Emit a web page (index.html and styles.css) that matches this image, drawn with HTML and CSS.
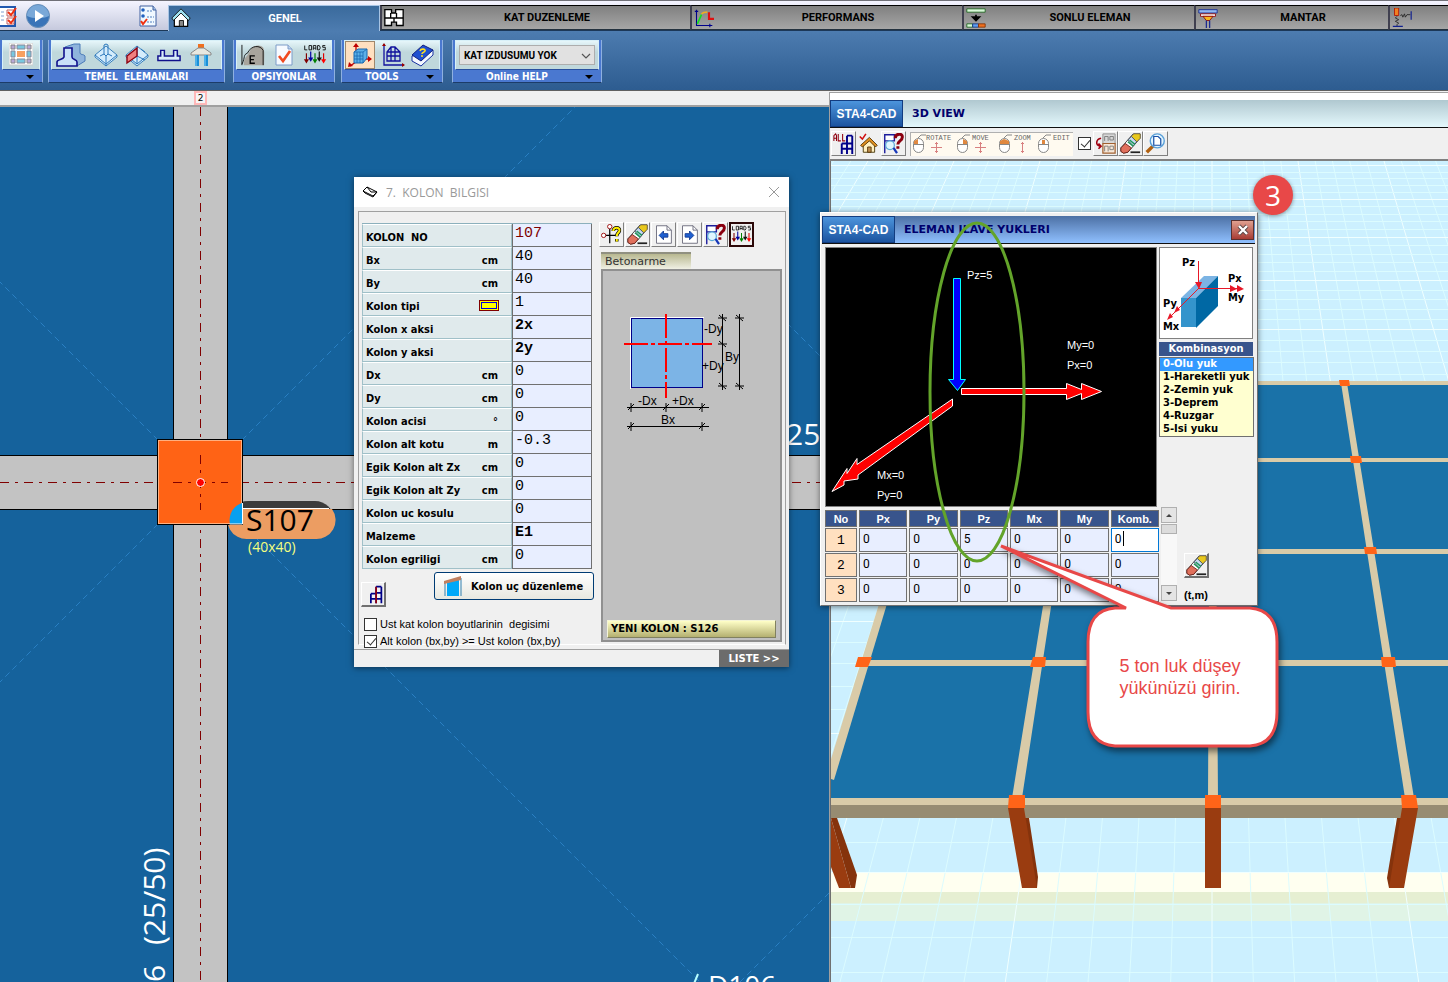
FILE: index.html
```html
<!DOCTYPE html>
<html lang="tr">
<head>
  <meta charset="UTF-8">
  <meta name="viewport" content="width=device-width, initial-scale=1.0">
  <title>STA4-CAD</title>
  <link rel="stylesheet" href="styles.css">
</head>
<body>
  <!-- Icons -->
  <svg class="sprite" aria-hidden="true">
    <symbol id="i-eraser" viewBox="0 0 24 24">
      <path d="M12 22h11" stroke="#222" stroke-width="2"/>
      <path d="M1 17 15 1h8v5L9 22l-5 1-3-2z" fill="#fff" stroke="#333"/>
      <path d="M13 4l3-3h7v5l-4 4z" fill="#e8c81e" stroke="#665010" stroke-width=".6"/>
      <path d="M9 8l4-4 6 6-4 5z" fill="#c8d8f0" stroke="#234" stroke-width=".8"/>
      <path d="M9 10l6 5M11 8l6 5" stroke="#1a9a5a" stroke-width="1.6"/>
      <path d="M1 17l5-5 7 5-4 5-5 1-3-2z" fill="#e0705c" stroke="#6a2018"/>
    </symbol>
    <symbol id="i-query" viewBox="0 0 24 24">
      <path d="M2 2h11v7H2zM2 9v14" fill="#fff" stroke="#1c1c9c" stroke-width="1.6"/>
      <circle cx="8" cy="14" r="5" fill="#dff6ff" stroke="#5aa8d8" stroke-width="1.4"/>
      <path d="M12 17l4 6" stroke="#1838b8" stroke-width="2.600"/>
      <path d="M14 6c0-6 9-6 8-1 0 4-5 4-5 8M17 15v3" fill="none" stroke="#8a0010" stroke-width="3.400"/>
    </symbol>
    <symbol id="i-loads" viewBox="0 0 28 24">
      <path d="M2 1v5h3M7 1h3v5H7zM12 6V1h3v5M12 4h3M17 1h2l1 2v1l-1 2h-2zM26 1h-3v2h3v3h-3" fill="none" stroke="#000"/>
      <path d="M4 10v9" stroke="#800000" stroke-width="1.4"/><path d="M1 17h6l-3 5z" fill="#800000"/>
      <path d="M9 8v9" stroke="#0000a0" stroke-width="1.4"/><path d="M6 15h6l-3 5z" fill="#0000a0"/>
      <path d="M14 10v9" stroke="#008000" stroke-width="1.4"/><path d="M11 17h6l-3 5z" fill="#008000"/>
      <path d="M19 8v9" stroke="#111" stroke-width="1.4"/><path d="M16 15h6l-3 5z" fill="#111"/>
      <path d="M24 10v9" stroke="#e00000" stroke-width="1.4"/><path d="M21 17h6l-3 5z" fill="#f00"/>
    </symbol>
    <symbol id="i-footing" viewBox="0 0 30 24">
      <path d="M9 4 18 1h6v9c0 2 4 1 5 3v5l-8 5z" fill="#8fb4dc" stroke="#4a7ab8"/>
      <path d="M8 5h8v9c0 3 5 2 5 5v4H1v-4c0-3 6-2 7-5z" fill="#c8e0f8" stroke="#10108c" stroke-width="1.6"/>
    </symbol>
    <symbol id="i-single" viewBox="0 0 24 24">
      <path d="M1 12 12 3l11 9v2L12 23 1 14z" fill="#d4ecfc" stroke="#3a80bc"/>
      <path d="M1 12l11 9 11-9M12 21v2M10 2l2-1 2 1v9l-2 2-2-2zM10 11l-4 2M14 11l4 2M12 13v7" fill="none" stroke="#2c78bc"/>
    </symbol>
    <symbol id="i-wall" viewBox="0 0 24 24">
      <path d="M1 12 12 3l11 9v2L12 23 1 14z" fill="#d4ecfc" stroke="#3a80bc"/>
      <path d="M1 12l11 9 11-9M12 13v8M12 13l8 4M16 6l4 3M12 3v10" fill="none" stroke="#2c78bc"/>
      <path d="M2 13 12 5v8L2 20z" fill="#f08080" stroke="#8c0010" stroke-width="1.4"/>
    </symbol>
    <symbol id="i-raft" viewBox="0 0 26 24">
      <path d="M1 18v-5h3V7h4v6h10V7h4v6h3v5z" fill="#d8ecf8" stroke="#10108c" stroke-width="1.6"/>
    </symbol>
    <symbol id="i-pile" viewBox="0 0 24 24">
      <path d="M9 1h6v4H9z" fill="#f07020"/><path d="M9 5h6l7 5v2H2v-2z" fill="#e8e8e0" stroke="#888"/>
      <path d="M8 12v11M17 12v11" stroke="#1a90d8" stroke-width="4"/><path d="M7 12v11M16 12v11" stroke="#80d0f8"/>
    </symbol>
    <symbol id="i-soil" viewBox="0 0 26 24">
      <path d="M3 23c0-8 3-9 6-14 3-8 12-9 15-5 2 4 1 12 1 19z" fill="#a8a49c"/>
      <path d="M1 1v22M1 22c4-8 1-10 6-12 4-9 14-9 17-3v16" fill="none" stroke="#111"/>
      <path d="M15 13h-5v8h5M10 17h4" fill="none" stroke="#000" stroke-width="1.500"/>
    </symbol>
    <symbol id="i-doc-check" viewBox="0 0 24 24">
      <path d="M4 2h12l4 4v16H4z" fill="#f6faff" stroke="#7c9cc8"/><path d="M16 2v4h4" fill="#c0d4f0" stroke="#7c9cc8"/>
      <path d="M7 13l4 5 7-10" fill="none" stroke="#f04a20" stroke-width="2.6"/>
    </symbol>
    <symbol id="i-cube" viewBox="0 0 24 24">
      <path d="M8 9V1M17 16h6M8 19l-6 4" stroke="#c00000" stroke-width="1.3"/>
      <path d="M5 4l3-4 3 4zM20 13l4 3-4 3zM1 19l-1 5 5-1z" fill="#c00000"/>
      <path d="M6 9l4-3h9v9l-4 5H6z" fill="#5cb0e8" stroke="#1868b0"/>
      <path d="M6 9h9v11M15 9l4-3M9 9v11M12 9v11M6 13h9M6 16h9" fill="none" stroke="#1868b0" stroke-width=".8"/>
    </symbol>
    <symbol id="i-grid" viewBox="0 0 24 24">
      <path d="M3 1v21h20M6 18V9l4-5h4l5 5v9zM6 9h13M6 13h13M10 4v14M14 4v14" fill="none" stroke="#10109c" stroke-width="1.3"/>
      <path d="M1 3l2-3 2 3zM21 20l3 2-3 2z" fill="#900"/>
    </symbol>
    <symbol id="i-book" viewBox="0 0 24 24">
      <path d="M2 13v5l9 5 12-11V7z" fill="#f4f8ff" stroke="#1830a0"/>
      <path d="M2 12 13 2l10 5-12 11z" fill="#2050d0" stroke="#102080"/>
      <path d="M10 8c1-3 6-2 5 0-1 2-3 1-3 3M11 13h2" fill="none" stroke="#ffe020" stroke-width="1.6"/>
    </symbol>
    <symbol id="i-plan" viewBox="0 0 24 24">
      <path d="M1 2h8v4h5V2h9v19h-8v-4H9v4H1z" fill="#fff" stroke="#000" stroke-width="1.6"/>
      <path d="M1 12h22M8 6v6M15 6v6M12 12v5" stroke="#000" stroke-width="1.6"/>
    </symbol>
    <symbol id="i-curve" viewBox="0 0 24 24">
      <path d="M3 2v19h19M1 4h4M19 19v4" fill="none" stroke="#00008c" stroke-width="1.3"/>
      <path d="M4 19 9 8" stroke="#10e020" stroke-width="2"/><path d="M9 7c2-2 4-2 7-2" fill="none" stroke="#f0b020" stroke-width="2"/>
      <path d="M18 5v8h6" fill="none" stroke="#e01010" stroke-width="2.600"/>
    </symbol>
    <symbol id="i-mesh" viewBox="0 0 24 24">
      <path d="M1 1h22v4H1z" fill="#d8f8d8" stroke="#186018"/><path d="M12 8v6M8 11l4 4 4-4z" stroke="#000" stroke-width="2"/>
      <path d="M1 19h7v4H1z" fill="#d8f8d8" stroke="#186018"/><path d="M8 19h7v4H8z" fill="#60a0f0" stroke="#103080"/><path d="M15 19h8v4h-8z" fill="#f07020" stroke="#803000"/>
    </symbol>
    <symbol id="i-mushroom" viewBox="0 0 24 24">
      <path d="M1 2h22v4H1z" fill="#90b8f0" stroke="#102090"/><path d="M3 7h18v3H3z" fill="#fff" stroke="#900000"/>
      <path d="M6 10h12l-4 5h-4z" fill="#f8b820" stroke="#900000"/><path d="M10 15v9M14 15v9" stroke="#102090" stroke-width="1.4"/>
    </symbol>
    <symbol id="i-spring" viewBox="0 0 24 24">
      <path d="M3 0h5v9H3z" fill="#f08020" stroke="#b01000"/>
      <path d="M6 10l-2 2 4 2-4 2 4 2-2 2v2M10 9l2-1 1 3 2-4 1 4 2-3h4" fill="none" stroke="#222"/>
      <path d="M1 22h12M23 4v10" stroke="#102090" stroke-width="1.4"/>
    </symbol>
    <symbol id="i-home" viewBox="0 0 24 24">
      <path d="M4 12v10h16V12l-8-8z" fill="#fff" stroke="#000" stroke-width="1.4"/>
      <path d="M1 12 12 1l11 11-2 3-9-9-9 9z" fill="#9fe0f0" stroke="#000"/><path d="M10 22v-7h5v7z" fill="#888" stroke="#000"/>
    </symbol>
    <symbol id="i-frame" viewBox="0 0 24 24">
      <path d="M9 22V11M15 22V3M21 22V3M9 11h6M9 17h12M15 3h6M15 10h6" fill="none" stroke="#000088" stroke-width="2"/>
      <path d="M15 3v19" stroke="#900010" stroke-width="2"/>
    </symbol>
    <symbol id="i-all" viewBox="0 0 24 24">
      <path d="M1 9V3l2-2 1 2v6M1 6h3M6 1v8h3M11 1v8h3" fill="none" stroke="#900010" stroke-width="1.2"/>
      <path d="M10 24V12M16 24V3M22 24V3M10 12h12M10 18h12M16 3h6" fill="none" stroke="#000088" stroke-width="2.200"/>
    </symbol>
    <symbol id="i-house" viewBox="0 0 24 24">
      <path d="M6 13v9h13v-9l-6-6z" fill="#fff0c0" stroke="#403000"/><path d="M3 14l10-9 9 9-2 2-7-7-8 7z" fill="#e09020" stroke="#503000"/>
      <path d="M11 22v-6h4v6z" fill="#c09050" stroke="#503000"/><path d="M2 4l3 3 4-6" fill="none" stroke="#d01010" stroke-width="1.8"/>
    </symbol>
    <symbol id="i-copy" viewBox="0 0 24 24">
      <path d="M9 1h14v11H9z" fill="#d8d8d8" stroke="#888"/><path d="M9 12h14v11H9z" fill="#f8e8d8" stroke="#a06030" stroke-width="1.4"/>
      <path d="M11 9V4h4v5M17 4h4v4h-4zM11 21v-6h4v6M17 15h4v4h-4z" fill="none" stroke="#777"/>
      <path d="M7 6c-6 1-7 8-1 9M4 12l3 3-3 3" fill="none" stroke="#a00010" stroke-width="1.8"/>
    </symbol>
    <symbol id="i-zoom" viewBox="0 0 24 24">
      <path d="M9 15l-7 7" stroke="#b06010" stroke-width="4"/><circle cx="14" cy="9" r="8" fill="#e4f6ff" stroke="#5aa0d8" stroke-width="1.6"/>
      <path d="M10 4h5l3 3v7h-8z" fill="#fff" stroke="#1850a8" stroke-width="1.4"/>
    </symbol>
    <symbol id="i-node" viewBox="0 0 24 24">
      <path d="M10 5v17M3 13h14" stroke="#000" stroke-width="1.4"/>
      <circle cx="10" cy="3" r="2.500" fill="#fff" stroke="#900"/><circle cx="3" cy="13" r="2.500" fill="#fff" stroke="#900"/>
      <path d="M14 8c0-5 8-5 7 0-1 3-3 2-3 6M18 17v3" fill="none" stroke="#000" stroke-width="4"/>
      <path d="M14 8c0-5 8-5 7 0-1 3-3 2-3 6M18 17v3" fill="none" stroke="#ffee00" stroke-width="2.400"/>
    </symbol>
    <symbol id="i-prev" viewBox="0 0 24 24">
      <path d="M4 2h12l5 5v15H4z" fill="#fff" stroke="#667"/><path d="M16 2v5h5" fill="none" stroke="#667"/>
      <path d="M7 13l5-5v3h5v4h-5v3z" fill="#2060d0" stroke="#103890"/>
    </symbol>
    <symbol id="i-next" viewBox="0 0 24 24">
      <path d="M4 2h12l5 5v15H4z" fill="#fff" stroke="#667"/><path d="M16 2v5h5" fill="none" stroke="#667"/>
      <path d="M17 13l-5-5v3H7v4h5v3z" fill="#2060d0" stroke="#103890"/>
    </symbol>
    <symbol id="i-list" viewBox="0 0 24 24">
      <path d="M4 2h13l3 4v16H4z" fill="#f0f8ff" stroke="#4060a0"/><path d="M17 2v4h3" fill="#a0c0e8" stroke="#4060a0"/>
      <circle cx="7" cy="6" r="1.800" fill="#2060c0"/><circle cx="7" cy="12" r="1.800" fill="#2060c0"/>
      <path d="M11 7h5M11 13h7M11 18h7" stroke="#5080c0" stroke-dasharray="2 1"/><path d="M5 17l2 3 4-5" fill="none" stroke="#f03010" stroke-width="2"/>
    </symbol>
    <symbol id="i-checks" viewBox="0 0 24 24">
      <path d="M0 3h21v19H0z" fill="#fff" stroke="#2058b0" stroke-width="2"/><path d="M2 8h9M2 12h9M2 16h9" stroke="#80a0d0" stroke-dasharray="3 2"/>
      <path d="M13 6h7v6h-7zM13 14h7v6h-7z" fill="#fff" stroke="#c06060"/>
      <path d="M14 8l3 3 5-7M14 16l3 3 5-7" fill="none" stroke="#f03010" stroke-width="2"/>
    </symbol>
    <symbol id="i-play" viewBox="0 0 24 24">
      <circle cx="12" cy="12" r="11.500" fill="#3a74b8" stroke="#6b90b8"/><path d="M1 12a11 11 0 0 1 22 0c-6 3-16 3-22 0z" fill="#7aa8d8"/><path d="M9 6l9 6-9 6z" fill="#fff"/>
    </symbol>
    <symbol id="i-slab" viewBox="0 0 24 24">
      <path d="M0 0h24v22H0z" fill="#fff" stroke="#ccc"/><path d="M2 2h4v4H2zM18 2h4v4h-4zM2 16h4v4H2zM18 16h4v4h-4z" fill="#b8a8d8" stroke="#888"/>
      <path d="M8 2h8v4H8zM8 16h8v4H8zM2 8h4v6H2zM18 8h4v6h-4z" fill="#78c8e0" stroke="#889"/><path d="M8 8h8v6H8z" fill="#f8a060"/>
    </symbol>
    <symbol id="i-chevron" viewBox="0 0 12 12"><path d="M2 4l4 4 4-4" fill="none" stroke="#555" stroke-width="1.2"/></symbol>
  </svg>

  <!-- Tabs -->
  <header class="tabbar">
    <div class="quick">
      <button class="plain" aria-label="Secenekler"><svg><use href="#i-checks"/></svg></button>
      <button class="plain" aria-label="Analiz"><svg><use href="#i-play"/></svg></button>
      <button class="plain quick-end" aria-label="Rapor"><svg><use href="#i-list"/></svg></button>
    </div>
    <button class="tab tab-main active"><svg><use href="#i-home"/></svg>GENEL</button>
    <button class="tab tab-kat"><svg><use href="#i-plan"/></svg>KAT DUZENLEME</button>
    <button class="tab tab-perf"><svg><use href="#i-curve"/></svg>PERFORMANS</button>
    <button class="tab tab-sonlu"><svg><use href="#i-mesh"/></svg>SONLU ELEMAN</button>
    <button class="tab tab-mantar"><svg><use href="#i-mushroom"/></svg>MANTAR</button>
    <button class="tab tab-last" aria-label="Zemin"><svg><use href="#i-spring"/></svg></button>
  </header>

  <!-- Ribbon -->
  <div class="ribbon">
    <section class="group g-cut">
      <div class="group-body"><button class="plain" aria-label="Doseme"><svg><use href="#i-slab"/></svg></button></div>
      <h2><i class="arrow"></i></h2>
    </section>
    <section class="group g-temel">
      <div class="group-body">
        <button class="plain wide" aria-label="Surekli temel"><svg><use href="#i-footing"/></svg></button>
        <button class="plain" aria-label="Tekil temel"><svg><use href="#i-single"/></svg></button>
        <button class="plain" aria-label="Perde temel"><svg><use href="#i-wall"/></svg></button>
        <button class="plain" aria-label="Radye"><svg><use href="#i-raft"/></svg></button>
        <button class="plain" aria-label="Kazik"><svg><use href="#i-pile"/></svg></button>
      </div>
      <h2>TEMEL&nbsp; ELEMANLARI</h2>
    </section>
    <section class="group g-ops">
      <div class="group-body">
        <button class="plain" aria-label="Zemin"><svg><use href="#i-soil"/></svg></button>
        <button class="plain" aria-label="Kontrol"><svg><use href="#i-doc-check"/></svg></button>
        <button class="plain" aria-label="Yukler"><svg><use href="#i-loads"/></svg></button>
      </div>
      <h2>OPSIYONLAR</h2>
    </section>
    <section class="group g-tools">
      <div class="group-body">
        <button class="plain on" aria-label="3D"><svg><use href="#i-cube"/></svg></button>
        <button class="plain" aria-label="Aks"><svg><use href="#i-grid"/></svg></button>
        <button class="plain" aria-label="Yardim"><svg><use href="#i-book"/></svg></button>
      </div>
      <h2>TOOLS<i class="arrow"></i></h2>
    </section>
    <section class="group g-help">
      <div class="group-body">
        <div class="combo">
          <select aria-label="Kat izdusumu"><option>KAT IZDUSUMU YOK</option></select>
          <svg><use href="#i-chevron"/></svg>
        </div>
      </div>
      <h2>Online HELP<i class="arrow"></i></h2>
    </section>
  </div>

  <main class="workspace">
    <div class="ruler"><span class="axis">2</span></div>

    <!-- Floor plan -->
    <svg class="plan">
      <g transform="translate(0 -107)">
        <g class="slab-lines">
          <path d="M242 440 575 107M158 440-175 107M158 524 0 682M242 524 700 982M740 982 832 890M780 316 832 368"/>
        </g>
        <path class="beam" d="M-5 455.500H835V509.500H-5zM173.500 100V1400H227.500V100z"/>
        <path class="beam-fill" d="M175 100h51v1300h-51zM0 457h835v51H0z"/>
        <path class="axis-line" d="M200.500 107V1400M0 482.500H835"/>
        <rect class="cap-shade" x="229" y="501" width="105" height="38" rx="19"/>
        <path class="cap" d="M231 509h101a19 19 0 0 1-17 30h-67a19 19 0 0 1-17-30z"/>
        <path d="M240 508.500h89" stroke="#fff"/>
        <rect x="157.500" y="439.500" width="85" height="85" fill="#ff6315" stroke="#000"/>
        <rect x="158.500" y="440.500" width="83" height="83" fill="none" stroke="#ffb080"/>
        <path d="M173 482.500h55M200.500 455v55" stroke="#800000" stroke-dasharray="9 6 3 6"/>
        <path d="M242 503v21h-12c-2-9 3-18 12-21z" fill="#08a0f0"/>
        <path d="M242.500 503v21h-13" fill="none" stroke="#fff"/>
        <circle cx="200.500" cy="482.500" r="4" fill="#f00" stroke="#fff"/>
        <text class="t-col" x="246" y="531">S107</text>
        <text class="t-dim" x="248" y="552">(40x40)</text>
        <text class="t-beam" x="786" y="445">25</text>
        <text class="t-beam" transform="translate(165 982) rotate(-90)" x="0" y="0">6</text>
        <text class="t-beam" transform="translate(165 945) rotate(-90)" x="0" y="0">(25/50)</text>
        <path d="M698 974l-5 12" stroke="#b8ffff" stroke-width="2"/>
        <text class="t-slab" x="708" y="996">D106</text>
      </g>
    </svg>

    <!-- 3D view -->
    <section class="view3d">
      <header class="title title-light"><b class="brand">STA4-CAD</b><h2>3D VIEW</h2></header>
      <div class="view-tools">
        <button class="tool" aria-label="Tumu"><svg><use href="#i-all"/></svg></button>
        <button class="tool flat" aria-label="Ev"><svg><use href="#i-house"/></svg></button>
        <button class="tool" aria-label="Sorgu"><svg><use href="#i-query"/></svg></button>
        <svg class="mouse-hints">
          <g fill="#fff" stroke="#888">
            <rect x="2.500" y="5.500" width="10" height="14" rx="5"/><rect x="46.500" y="5.500" width="10" height="14" rx="5"/>
            <rect x="88.500" y="5.500" width="10" height="14" rx="5"/><rect x="127.500" y="5.500" width="10" height="14" rx="5"/>
            <path d="M2 11.500h11M46 11.500h11M88 11.500h11M127 11.500h11M7 5l3-3h5M51 5l3-3h5M93 5l3-3h5M132 5l3-3h5" fill="none"/>
          </g>
          <path d="M3 11V8l4-2v5zM52 6l4 2v3h-4zM89 11V8l4-2 5 2v3zM131 7h3v4h-3z" fill="#e08840"/>
          <path d="M25.500 9v11M20 14.500h11M69.500 9v11M64 14.500h11M111.500 9v11M24 10.500h3M24 18.500h3M68 10.500h3M68 18.500h3M110 10.500h3M110 18.500h3" stroke="#d88080"/>
          <g class="hint-text"><text x="15" y="7">ROTATE</text><text x="61" y="7">MOVE</text><text x="103" y="7">ZOOM</text><text x="142" y="7">EDIT</text></g>
        </svg>
        <input class="tick" type="checkbox" checked aria-label="Goster">
        <button class="tool" aria-label="Kopyala"><svg><use href="#i-copy"/></svg></button>
        <button class="tool" aria-label="Sil"><svg><use href="#i-eraser"/></svg></button>
        <button class="tool" aria-label="Onizleme"><svg><use href="#i-zoom"/></svg></button>
      </div>
      <svg class="scene">
        <g transform="translate(-830 -161)">
          <path d="M830 872H3000v20H830z" fill="#fffff0"/>
          <path d="M830 892H3000v11H830z" fill="#e6efd2"/>
          <path d="M830 903H3000v18H830z" fill="#e0f4e6"/>
          <g id="ground"></g>
          <path d="M948 381H3000V800H831V772z" fill="#1a72a8"/>
          <path d="M948 381h6L834 780l-3-1v-20z" fill="#d9cba8"/>
          <path d="M940 381H3000v4H940zM920 458H3000v4H920zM890 549H3000v5H890zM860 660H3000v6H860zM831 798H3000v7H831z" fill="#d9cba8"/>
          <path d="M1079 383h6L1022 798h-10zM1210 383h5l3 415h-10zM1341 383h6l67 415h-9z" fill="#d9cba8"/>
          <path d="M831 805H3000v13H831z" fill="#978c72"/>
          <path d="M831 818h6l20 57-2 13h-4z" fill="#85330c"/>
          <path d="M831 818l20 70h-12l-8-21z" fill="#9a3c10"/>
          <path d="M1024 818h5l9 59-1 11h-4zM1397 818h5l-9 70h-4l-2-10z" fill="#85330c"/>
          <path d="M1008 808h16l13 80h-15zM1205 808h16v80h-16zM1402 808h16l-14 80h-15z" fill="#9a3c10"/>
          <path d="M1009 795h16v13h-17zM1205 795h16v13h-16zM1401 795h15l2 13h-16zM1033 657h13l-1 10h-15zM858 657h14l-4 10h-13zM1381 657h14l1 10h-14zM1350 456h11l1 7h-11zM1364 547h12l1 7h-12zM1339 380h10l1 6h-10z" fill="#ff6418"/>
          <path d="M830.500 160V3000" stroke="#707070"/>
        </g>
      </svg>
    </section>

    <!-- Column dialog -->
    <section class="dialog column-dialog">
      <header class="win-title">
        <svg class="win-icon" viewBox="0 0 16 12"><path d="M1 5l4-4 10 5-4 4zM1 5l2 2 8 4 4-5M5 1l4 5 6 0" fill="#fff" stroke="#000"/></svg>
        <h2>7.&nbsp; KOLON&nbsp; BILGISI</h2>
        <button class="plain win-close" aria-label="Kapat"><svg viewBox="0 0 12 12"><path d="M1 1l10 10M11 1 1 11" stroke="#999"/></svg></button>
      </header>
      <div class="dialog-frame">
        <div class="left-col">
          <div class="props">
            <div class="prop"><label for="p0">KOLON&nbsp; NO</label><input id="p0" class="dark-red" value="107"></div>
            <div class="prop"><label for="p1">Bx <span>cm</span></label><input id="p1" value="40"></div>
            <div class="prop"><label for="p2">By <span>cm</span></label><input id="p2" value="40"></div>
            <div class="prop"><label for="p3">Kolon tipi <i class="type-box"></i></label><input id="p3" value="1"></div>
            <div class="prop"><label for="p4">Kolon x aksi</label><input id="p4" class="strong" value="2x"></div>
            <div class="prop"><label for="p5">Kolon y aksi</label><input id="p5" class="strong" value="2y"></div>
            <div class="prop"><label for="p6">Dx <span>cm</span></label><input id="p6" value="0"></div>
            <div class="prop"><label for="p7">Dy <span>cm</span></label><input id="p7" value="0"></div>
            <div class="prop"><label for="p8">Kolon acisi <span>°</span></label><input id="p8" value="0"></div>
            <div class="prop"><label for="p9">Kolon alt kotu <span>m</span></label><input id="p9" value="-0.3"></div>
            <div class="prop"><label for="p10">Egik Kolon alt Zx <span>cm</span></label><input id="p10" value="0"></div>
            <div class="prop"><label for="p11">Egik Kolon alt Zy <span>cm</span></label><input id="p11" value="0"></div>
            <div class="prop"><label for="p12">Kolon uc kosulu</label><input id="p12" value="0"></div>
            <div class="prop"><label for="p13">Malzeme</label><input id="p13" class="strong" value="E1"></div>
            <div class="prop"><label for="p14">Kolon egriligi <span>cm</span></label><input id="p14" value="0"></div>
          </div>
          <div class="actions">
            <button class="tool low" aria-label="Cerceve"><svg><use href="#i-frame"/></svg></button>
            <button class="end-button">
              <svg viewBox="0 0 20 22"><path d="M2 7v14M18 3v18" stroke="#3080b0"/><path d="M4 7l12-4v18H4z" fill="#00a8f8"/><path d="M1 6 18 1v4L1 9z" fill="#c08060"/></svg>
              Kolon uç düzenleme
            </button>
          </div>
          <div class="checks">
            <label><input class="tick" type="checkbox">Ust kat kolon boyutlarinin&nbsp; degisimi</label>
            <label><input class="tick" type="checkbox" checked>Alt kolon (bx,by) &gt;= Ust kolon (bx,by)</label>
          </div>
        </div>
        <div class="right-col">
          <div class="tool-row">
            <button class="tool" aria-label="Dugum"><svg><use href="#i-node"/></svg></button>
            <button class="tool" aria-label="Sil"><svg><use href="#i-eraser"/></svg></button>
            <button class="tool" aria-label="Onceki"><svg><use href="#i-prev"/></svg></button>
            <button class="tool" aria-label="Sonraki"><svg><use href="#i-next"/></svg></button>
            <button class="tool" aria-label="Sorgu"><svg><use href="#i-query"/></svg></button>
            <button class="tool pressed" aria-label="Yukler"><svg><use href="#i-loads"/></svg></button>
          </div>
          <button class="mat-tab">Betonarme</button>
          <div class="section-panel">
            <svg class="section-draw">
              <rect x="27.500" y="46.500" width="71" height="69" fill="#7cb4e6" stroke="#000088"/>
              <path d="M26.500 117V45.500H100" fill="none" stroke="#fff"/>
              <path d="M20 72h88M62 42v84" stroke="#f00" stroke-width="2" stroke-dasharray="24 3 4 3"/>
              <path d="M118.500 42v76M135.500 42v76M23 135.500h82M23 154.500h82" stroke="#000"/>
              <path d="M114 46h9M114 72h9M114 114h9M131 46h9M131 114h9M27 131v9M62 131v9M98 131v9M27 150v9M98 150v9
                M115 43l7 6M115 69l7 6M115 111l7 6M132 43l7 6M132 111l7 6M24 138l6-6M59 138l6-6M95 138l6-6M24 157l6-6M95 157l6-6" stroke="#000"/>
              <text x="100" y="61">-Dy</text><text x="98" y="98">+Dy</text><text x="121" y="89">By</text>
              <text x="34" y="133">-Dx</text><text x="68" y="133">+Dx</text><text x="57" y="152">Bx</text>
            </svg>
            <div class="new-col">YENI KOLON : S126</div>
          </div>
        </div>
      </div>
      <footer class="status"><button>LISTE &gt;&gt;</button></footer>
    </section>

    <!-- Extra load dialog -->
    <section class="dialog load-dialog">
      <header class="title title-blue">
        <b class="brand">STA4-CAD</b><h2>ELEMAN ILAVE YUKLERI</h2>
        <button class="red-close" aria-label="Kapat"><svg viewBox="0 0 12 12"><path d="M2 2l8 8M10 2l-8 8" stroke="#544" stroke-width="4"/><path d="M2 2l8 8M10 2l-8 8" stroke="#fff" stroke-width="2.400"/></svg></button>
      </header>
      <div class="load-top">
        <svg class="load-view" viewBox="0 0 330 258">
          <path d="M127.500 30.500h7v101h5l-8 11-9-11h5z" fill="#00f" stroke="#0ff"/>
          <path d="M135.500 140.500h105v-5l15 6v-6l20 8-20 8v-6l-15 6v-5h-105z" fill="#f00" stroke="#fff"/>
          <path d="M126.500 151v7L32 227v4l-14 2v4L6 243.500l15-23v5l10-15v6z" fill="#f00" stroke="#fff"/>
          <text x="141" y="31">Pz=5</text><text x="241" y="101">My=0</text><text x="241" y="121">Px=0</text>
          <text x="51" y="231">Mx=0</text><text x="51" y="251">Py=0</text>
        </svg>
        <div class="combos">
          <svg class="axes" viewBox="0 0 92 90">
            <path d="M21 50 44 28h14L36 50z" fill="#7cb4e4"/><path d="M21 50h15v29H21z" fill="#3494cc"/><path d="M36 50 58 28v30L36 80z" fill="#0068a4"/>
            <path d="M38.500 13v26M38 40.500h44M38 41 9 70" stroke="#e81828" fill="none"/>
            <path d="M35 34h7l-3 7zM70 37l7 4-7 3zM77 37l7 4-7 3zM7 72l3-7 3 4zM14 65l3-7 3 4z" fill="#e81828"/>
            <text x="22" y="18">Pz</text><text x="68" y="34">Px</text><text x="68" y="53">My</text><text x="3" y="59">Py</text><text x="3" y="82">Mx</text>
          </svg>
          <label class="combo-head" for="komb">Kombinasyon</label>
          <select id="komb" class="combo-list" size="6">
            <option selected>0-Olu yuk</option>
            <option>1-Hareketli yuk</option>
            <option>2-Zemin yuk</option>
            <option>3-Deprem</option>
            <option>4-Ruzgar</option>
            <option>5-Isi yuku</option>
          </select>
        </div>
      </div>
      <div class="load-bottom">
        <table class="loads">
          <thead><tr><th>No</th><th>Px</th><th>Py</th><th>Pz</th><th>Mx</th><th>My</th><th>Komb.</th></tr></thead>
          <tbody>
            <tr><th>1</th><td><input aria-label="Px 1" value="0"></td><td><input aria-label="Py 1" value="0"></td><td><input aria-label="Pz 1" value="5"></td><td><input aria-label="Mx 1" value="0"></td><td><input aria-label="My 1" value="0"></td><td class="edit"><input aria-label="Komb 1" value="0"></td></tr>
            <tr><th>2</th><td><input aria-label="Px 2" value="0"></td><td><input aria-label="Py 2" value="0"></td><td><input aria-label="Pz 2" value="0"></td><td><input aria-label="Mx 2" value="0"></td><td><input aria-label="My 2" value="0"></td><td><input aria-label="Komb 2" value="0"></td></tr>
            <tr><th>3</th><td><input aria-label="Px 3" value="0"></td><td><input aria-label="Py 3" value="0"></td><td><input aria-label="Pz 3" value="0"></td><td><input aria-label="Mx 3" value="0"></td><td><input aria-label="My 3" value="0"></td><td><input aria-label="Komb 3" value="0"></td></tr>
          </tbody>
        </table>
        <div class="scrollbar"><button aria-label="Yukari"><i class="up"></i></button><span class="thumb"></span><button aria-label="Asagi"><i class="down"></i></button></div>
        <div class="load-side">
          <button class="tool low" aria-label="Sil"><svg><use href="#i-eraser"/></svg></button>
          <span>(t,m)</span>
        </div>
      </div>
    </section>

    <!-- Annotations -->
    <svg class="marks">
      <g transform="translate(0 -90)">
        <ellipse cx="977" cy="392" rx="47" ry="169" fill="none" stroke="#63a42a" stroke-width="3"/>
        <path class="balloon" d="M1001 546 1171 608H1250Q1277 610 1277 642V712Q1277 744 1250 746H1115Q1088 744 1088 712V642Q1088 610 1115 608H1126z"/>
      </g>
    </svg>
    <p class="callout">5 ton luk düşey<br>yükünüzü girin.</p>
    <span class="step">3</span>
  </main>
  <script src="script.js"></script>
</body>
</html>
```

FILE: styles.css
```css
* {
  box-sizing: border-box;
}

body {
  margin: 0;
  height: 100vh;
  display: flex;
  flex-direction: column;
  overflow: hidden;
  font-family: "DejaVu Sans Condensed", "DejaVu Sans", sans-serif;
  font-size: 11px;
  color: #000;
  background: #15629c;
}

h2, p {
  margin: 0;
  font-size: inherit;
}

button, input, select {
  font: inherit;
  color: inherit;
  margin: 0;
  padding: 0;
  border: 0;
  border-radius: 0;
}

svg {
  display: block;
}

.sprite {
  position: absolute;
  width: 0;
  height: 0;
}

.plain {
  background: none;
  width: 24px;
  height: 24px;
}

.plain svg {
  width: 24px;
  height: 24px;
}

/* Tabs */
.tabbar {
  display: flex;
  height: 31px;
  flex: none;
  padding-top: 4px;
  border-top: 1px solid #707078;
  background: linear-gradient(#f4f4ff, #c4c8dc);
  box-shadow: inset 0 -1px #1c3858;
}

.quick {
  display: flex;
  align-items: center;
  width: 168px;
  flex: none;
  padding-bottom: 4px;
  gap: 8px;
}

.quick .plain:first-child {
  width: 18px;
  overflow: hidden;
  display: flex;
  justify-content: flex-end;
}

.quick .plain:first-child svg {
  flex: none;
}

.quick-end {
  margin: 0 8px 0 auto;
}

.tab {
  position: relative;
  height: 25px;
  padding-left: 22px;
  border-left: 2px solid #404050;
  border-top: 1px solid #000;
  border-bottom: 1px solid #24323f;
  background: linear-gradient(#808080, #a6a6a6);
  font: bold 11px Roboto, sans-serif;
}

.tab svg {
  position: absolute;
  left: 2px;
  top: 2px;
  width: 20px;
  height: 20px;
}

.tab.active {
  height: 26px;
  border: 1px solid #a8c4e4;
  border-bottom: 0;
  background: linear-gradient(#3a6a9c, #4d7cb0);
  color: #fff;
}

.tab-main { width: 212px; }
.tab-kat { width: 310px; }
.tab-perf { width: 272px; }
.tab-sonlu { width: 232px; }
.tab-mantar { width: 194px; }
.tab-last { flex: 1; }

/* Ribbon */
.ribbon {
  display: flex;
  flex: none;
  height: 59px;
  padding-top: 9px;
  background: linear-gradient(#4d7cb0, #2d5c90);
}

.group {
  height: 43px;
  border: 1px solid #8eb0e0;
  border-top: 0;
  border-bottom-color: #1c3c68;
  background: #4a78d0;
  padding: 0 2px;
}

.g-cut { width: 43px; border-left: 0; margin-right: 5px; }
.g-temel { width: 177px; margin-right: 8px; }
.g-ops { width: 102px; margin-right: 6px; }
.g-tools { width: 102px; margin-right: 9px; }
.g-help { width: 150px; }

.group-body {
  display: flex;
  align-items: center;
  justify-content: space-around;
  height: 30px;
  background: linear-gradient(#e6f6fa, #c0d8dc 40%);
  border: 1px solid #d8f0f8;
  border-bottom-color: #2850a0;
}

.g-temel .group-body {
  padding-right: 4px;
}

.g-tools .group-body {
  justify-content: space-between;
  padding-right: 5px;
}

.group .wide {
  width: 30px;
}

.wide svg {
  width: 30px;
}

.plain.on {
  width: 30px;
  height: 28px;
  padding-left: 2px;
  background: #ffe0c0;
  border: 1px solid #a0886c;
}

.group h2 {
  position: relative;
  text-align: center;
  font: bold 10px/13px "DejaVu Sans Condensed", sans-serif;
  color: #fff;
}

.g-tools h2, .g-help h2 {
  padding-right: 20px;
}

.arrow {
  position: absolute;
  right: 6px;
  top: 5px;
  border: 4px solid transparent;
  border-top-color: #000;
  border-bottom: 0;
}

.combo {
  position: relative;
}

.combo select {
  appearance: none;
  width: 136px;
  height: 20px;
  padding-left: 4px;
  border: 1px solid #adadad;
  background: #e1e1e1;
  font: bold 10px Roboto, sans-serif;
}

.combo svg {
  position: absolute;
  right: 3px;
  top: 5px;
  width: 12px;
  height: 12px;
}

/* Workspace */
.workspace {
  position: relative;
  flex: 1;
  display: flex;
  flex-direction: column;
  min-height: 0;
}

.ruler {
  height: 17px;
  flex: none;
  padding-left: 194px;
  background: #f0f0f0;
  border-top: 1px solid #606060;
  border-bottom: 2px solid #a0a0a0;
}

.axis {
  display: block;
  width: 13px;
  border: 2px solid #ffb8b8;
  font: 9px/10px "DejaVu Sans", sans-serif;
  text-align: center;
  background: #f6f6f6;
}

.plan {
  flex: 1;
  width: 100%;
  min-height: 0;
  background: #15629c;
  font-family: "Open Sans", sans-serif;
}

.slab-lines {
  stroke: #2a80c4;
  stroke-dasharray: 6 4;
}

.beam {
  fill: #c3c3c3;
  stroke: #000;
}

.beam-fill {
  fill: #c3c3c3;
}

.axis-line {
  stroke: #800000;
  stroke-dasharray: 9 6 3 6;
}

.cap-shade {
  fill: #3c3c3c;
}

.cap {
  fill: #ec9d62;
}

.t-col {
  font-size: 30px;
}

.t-dim {
  font-size: 14px;
  fill: #f4ff80;
}

.t-beam {
  font-size: 30px;
  fill: #fff;
}

.t-slab {
  font-size: 28px;
  fill: #fff;
}

/* 3D view */
.view3d {
  position: absolute;
  left: 829px;
  top: 2px;
  right: 0;
  bottom: 0;
  display: flex;
  flex-direction: column;
  background: #fff;
  border-top: 1px solid #a0a0a0;
  border-left: 1px solid #a0a0a0;
  padding-top: 7px;
}

.title {
  display: flex;
  align-items: center;
  height: 28px;
  flex: none;
  border-bottom: 1px solid #101010;
  color: #00006c;
  font: bold 11px "DejaVu Sans", sans-serif;
}

.title-light {
  background: linear-gradient(#b0c8d0, #e4f8fc);
}

.brand {
  width: 73px;
  height: 27px;
  margin-right: 9px;
  border: 1px solid #123c80;
  background: linear-gradient(#4c94dc, #1c54a0);
  color: #fff;
  font: bold 12px/26px "Liberation Sans", sans-serif;
  text-align: center;
}

.view-tools {
  display: flex;
  align-items: center;
  height: 33px;
  flex: none;
  padding-left: 1px;
  background: #f0f0f0;
  border-bottom: 2px solid #808080;
}

.tool {
  width: 25px;
  height: 25px;
  padding: 1px;
  background: #f0f0f0;
  border: 1px solid #fff;
  border-right-color: #808080;
  border-bottom-color: #808080;
}

.tool svg {
  width: 21px;
  height: 21px;
}

.tool.flat {
  border-color: #f0f0f0;
}

.tool.pressed {
  border: 2px solid #2c0808;
  padding: 0;
}

.tool.low {
  border-right: 2px solid #707070;
  border-bottom: 2px solid #707070;
}

.mouse-hints {
  width: 163px;
  height: 24px;
  margin: 0 5px 0 4px;
  background: #fffaf0;
  border: 1px solid #b0b0b0;
  border-right: 0;
  border-bottom: 0;
}

.hint-text {
  font: 7px "Liberation Mono", monospace;
  fill: #666;
}

.tick {
  appearance: none;
  width: 13px;
  height: 13px;
  flex: none;
  background: #fff;
  border: 1px solid #333;
}

.tick:checked::after {
  content: "";
  display: block;
  width: 4px;
  height: 8px;
  margin: 0 0 0 4px;
  border: solid #333;
  border-width: 0 1px 1px 0;
  transform: rotate(40deg);
}

.view-tools .tick {
  margin-right: 2px;
}

.scene {
  flex: 1;
  width: 100%;
  min-height: 0;
  background: #ccf0ff;
}

.minor {
  stroke: #dcfcff;
}

.major {
  stroke: #f0ffff;
}

/* Dialogs */
.dialog {
  position: absolute;
  background: #f0f0f0;
  box-shadow: 0 1px 6px rgba(0, 0, 0, 0.5);
}

.column-dialog {
  left: 354px;
  top: 87px;
  width: 435px;
}

.win-title {
  display: flex;
  align-items: center;
  height: 30px;
  padding: 0 9px 0 7px;
  background: #fff;
  color: #999;
}

.win-title h2 {
  flex: 1;
  font: 12px "Open Sans", sans-serif;
}

.win-icon {
  width: 18px;
  height: 12px;
  margin-right: 7px;
}

.win-close, .win-close svg {
  width: 12px;
  height: 12px;
}

.dialog-frame {
  display: flex;
  margin: 4px 3px 4px 4px;
  padding: 11px 3px 0 3px;
  height: 434px;
  border: 1px solid #a0a0a0;
  border-bottom-color: #fff;
}

.left-col {
  width: 238px;
}

.props {
  width: 230px;
  border-top: 1px solid #8cb0bc;
}

.prop {
  display: flex;
  height: 23px;
}

.prop label {
  display: flex;
  justify-content: space-between;
  width: 150px;
  padding: 6px 13px 0 3px;
  border: 1px solid #a0c0c8;
  border-top-color: #fff;
  background: #e0eaec;
  font-weight: bold;
  line-height: 14px;
}

.prop input {
  width: 80px;
  height: 23px;
  padding: 0 2px 3px;
  border: 1px solid #707070;
  border-top: 0;
  background: #e8eeff;
  font: 15px "Liberation Mono", monospace;
}

.prop input.dark-red {
  color: #800000;
}

.prop input.strong {
  font-weight: bold;
}

.type-box {
  width: 20px;
  height: 11px;
  margin-right: -1px;
  border: 1px solid #800000;
  background: #ff0;
  box-shadow: inset 0 0 0 1px #ff0, inset 0 0 0 2px #0000e0;
}

.actions {
  display: flex;
  justify-content: space-between;
  align-items: flex-end;
  height: 38px;
  width: 232px;
}

.actions .tool {
  margin-left: -1px;
}

.end-button {
  display: flex;
  align-items: center;
  gap: 8px;
  width: 160px;
  height: 28px;
  margin-bottom: 7px;
  padding-left: 8px;
  border: 1px solid #003c74;
  border-radius: 3px;
  background: linear-gradient(#fff, #e8e8e0);
  font-weight: bold;
  white-space: nowrap;
}

.end-button svg {
  width: 20px;
  height: 22px;
}

.checks {
  padding: 9px 0 0 2px;
  font: 11px/17px "Liberation Sans", sans-serif;
  white-space: nowrap;
}

.checks label {
  display: flex;
  align-items: center;
  gap: 3px;
}

.right-col {
  flex: 1;
  display: flex;
  flex-direction: column;
  align-items: flex-start;
  padding-left: 3px;
}

.tool-row {
  display: flex;
  gap: 1px;
  margin: -1px -4px 5px -2px;
}

.mat-tab {
  width: 90px;
  height: 17px;
  padding-left: 4px;
  border-top: 2px solid #909080;
  background: linear-gradient(#b8b890, #f0f0e4);
  font: 11px/14px "DejaVu Sans", sans-serif;
  text-align: left;
  color: #333;
}

.section-panel {
  width: 181px;
  height: 373px;
  padding: 1px;
  border: 2px solid #909090;
  background: #c0c0c0;
}

.section-draw {
  width: 100%;
  height: 348px;
  font: 12px "Liberation Sans", sans-serif;
}

.new-col {
  margin: 0 3px;
  padding-left: 3px;
  background: linear-gradient(#ffffc8, #b4b070);
  border: 1px solid #f4f4d8;
  border-right-color: #808060;
  border-bottom-color: #808060;
  font: bold 10px/16px "DejaVu Sans", sans-serif;
}

.status {
  display: flex;
  justify-content: flex-end;
  height: 18px;
  border-top: 1px solid #a0a0a0;
}

.status button {
  width: 70px;
  background: #6c6c6c;
  color: #fff;
  font: bold 10px "DejaVu Sans", sans-serif;
}

.load-dialog {
  left: 820px;
  top: 122px;
  width: 438px;
  height: 394px;
  padding: 3px 2px 0 1px;
  border: 1px solid #fff;
  border-right-color: #707070;
  border-bottom-color: #707070;
}

.title-blue {
  background: linear-gradient(#4c70a4, #90c0ff);
}

.title-blue h2 {
  flex: 1;
}

.red-close {
  display: flex;
  align-items: center;
  justify-content: center;
  width: 23px;
  height: 20px;
  margin-right: 1px;
  border: 1px solid #583030;
  background: linear-gradient(#e0a090, #a83c34);
}

.red-close svg {
  width: 12px;
  height: 12px;
}

.load-top {
  display: flex;
  gap: 2px;
  padding: 3px 0 0 3px;
}

.load-view {
  width: 332px;
  height: 260px;
  border: 1px solid #808080;
  background: #000;
  fill: #fff;
  font: 11px "Liberation Sans", sans-serif;
}

.combos {
  width: 94px;
}

.axes {
  width: 94px;
  height: 92px;
  margin-bottom: 3px;
  border: 1px solid #808080;
  background: #fff;
  font: bold 11px "DejaVu Sans Condensed", sans-serif;
}

.combo-head {
  display: block;
  background: #38548c;
  color: #fff;
  font: bold 11px/14px "DejaVu Sans Condensed", sans-serif;
  text-align: center;
}

.combo-list {
  width: 95px;
  height: 80px;
  margin-top: 1px;
  border: 1px solid #707070;
  background: #ffffd0;
  overflow: hidden;
}

.combo-list option {
  height: 13px;
  min-height: 13px;
  padding: 0 3px;
  font: bold 10px/13px "DejaVu Sans", sans-serif;
}

.combo-list option:checked {
  background: #3399ff linear-gradient(#3399ff, #3399ff);
  color: #fff;
}

.load-bottom {
  display: flex;
  align-items: flex-start;
  padding-left: 1px;
}

.loads {
  border-spacing: 2px 1px;
  margin-top: 2px;
  table-layout: fixed;
  width: 338px;
}

.loads th, .loads td {
  height: 24px;
  padding: 0;
  border: 1px solid #707070;
  background: #e8eeff;
}

.loads th:first-child {
  width: 32px;
}

.loads tbody th {
  background: #ffe0c0;
  font: 13px "Liberation Mono", monospace;
}

.loads thead th {
  height: 17px;
  background: #38548c;
  color: #fff;
  font: bold 11px/14px "Liberation Sans", sans-serif;
}

.loads input {
  display: block;
  width: 100%;
  height: 22px;
  padding: 0 2px 3px 3px;
  background: none;
  font: 12px Roboto, sans-serif;
}

.loads .edit {
  background: #fff;
  border-color: #0078d7;
}

/* text cursor of the active cell */
.loads .edit input {
  background: linear-gradient(#000, #000) 11px 2px / 1px 15px no-repeat;
}

.scrollbar {
  display: flex;
  flex-direction: column;
  width: 16px;
  height: 94px;
  background: #f8f8f8;
}

.scrollbar button {
  height: 16px;
  border: 1px solid #b0b0b0;
  background: #e4e4e4;
}

.scrollbar button:last-child {
  margin-top: auto;
}

.thumb {
  height: 10px;
  margin-top: 1px;
  border: 1px solid #b0b0b0;
  background: #dcdcdc;
}

.up, .down {
  display: block;
  width: 0;
  margin: 0 auto;
  border: 3px solid transparent;
}

.up {
  border-top: 0;
  border-bottom-color: #444;
}

.down {
  border-bottom: 0;
  border-top-color: #444;
}

.load-side {
  display: flex;
  flex-direction: column;
  gap: 10px;
  padding: 46px 0 0 7px;
  font: bold 11px/14px "Liberation Sans", sans-serif;
}

/* Annotations */
.marks {
  position: absolute;
  left: 0;
  top: 0;
  width: 100%;
  height: 100%;
  pointer-events: none;
}

.balloon {
  fill: #fff;
  stroke: #e84848;
  stroke-width: 3;
  filter: drop-shadow(2px 4px 3px rgba(0, 0, 0, 0.5));
}

.callout {
  position: absolute;
  left: 1088px;
  top: 565px;
  width: 184px;
  text-align: center;
  font: 18px/22px "Liberation Sans", sans-serif;
  color: #e84848;
}

.step {
  position: absolute;
  left: 1253px;
  top: 85px;
  width: 40px;
  height: 40px;
  border-radius: 50%;
  background: #e84848;
  box-shadow: 0 1px 4px rgba(0, 0, 0, 0.4);
  color: #fff;
  font: 28px/40px "Open Sans", sans-serif;
  text-align: center;
}
```

FILE: script.js
```js
// ground grid of the 3D view, drawn towards one vanishing point
const ground = document.getElementById('ground');
const vx = 1212, vy = -424, far = 160, near = 1600;

function line(x1, y1, x2, y2, major) {
  const el = document.createElementNS('http://www.w3.org/2000/svg', 'line');
  el.setAttribute('x1', x1);
  el.setAttribute('y1', y1);
  el.setAttribute('x2', x2);
  el.setAttribute('y2', y2);
  el.setAttribute('class', major ? 'major' : 'minor');
  ground.appendChild(el);
}

for (let i = -60; i <= 60; i++) {
  const dx = i * 17.2 / 585;
  line(vx + dx * (far - vy), far, vx + dx * (near - vy), near, i % 5 === 0);
}

for (let k = -14; k <= 52; k++) {
  const y = Math.round(vy + 54000 / (41.67 + k)) + 0.5;
  line(0, y, 3000, y, k % 5 === 0);
}
```
